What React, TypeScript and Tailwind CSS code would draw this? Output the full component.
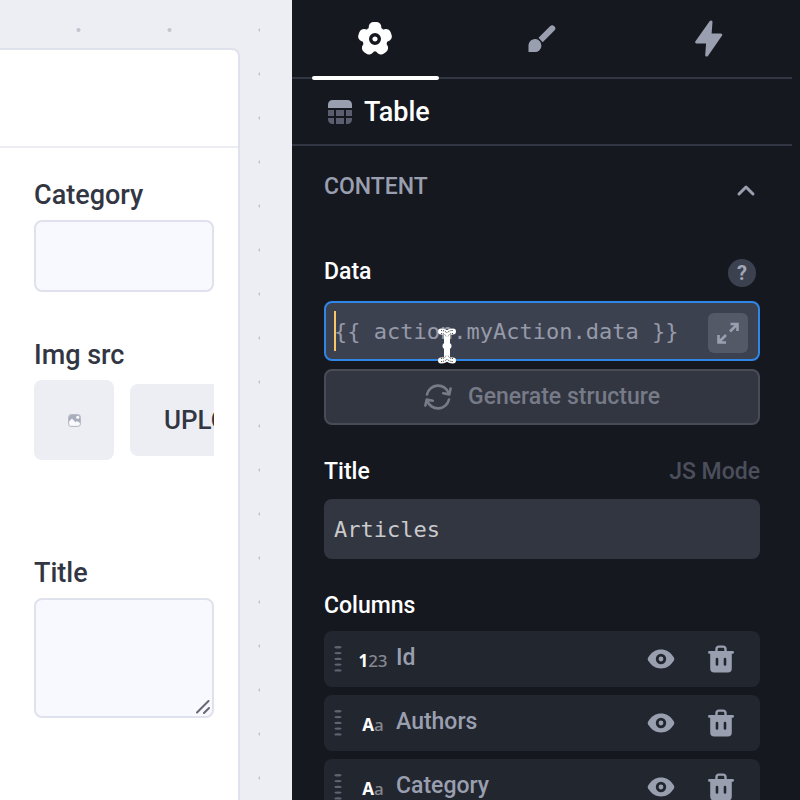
import React from "react";

type Column = { name: string; kind: "number" | "text" };

const columns: Column[] = [
  { name: "Id", kind: "number" },
  { name: "Authors", kind: "text" },
  { name: "Category", kind: "text" },
];

function GearIcon() {
  return (
    <svg width="36" height="36" viewBox="-18 -18 36 36" fill="currentColor" aria-hidden="true">
      <circle r="12.500" />
      {[0, 72, 144, 216, 288].map((a) => (
        <rect key={a} x="-6.300" y="-17" width="12.600" height="14" rx="5" transform={`rotate(${a})`} />
      ))}
      <circle r="4.300" fill="none" stroke="#15181f" strokeWidth="3.400" />
    </svg>
  );
}

function BrushIcon() {
  return (
    <svg width="30" height="30" viewBox="0 0 30 30" fill="currentColor" aria-hidden="true">
      <path d="M1.500 28V20.800a6.500 6.500 0 1 1 6.500 7.200Z" />
      <path d="M11.500 13.800 23 2.300a3 3 0 0 1 4.400 4.200L15.700 18.200Z" />
    </svg>
  );
}

function BoltIcon() {
  return (
    <svg width="28" height="38" viewBox="0.5 0.5 28 38" fill="currentColor" stroke="currentColor" strokeWidth="3" strokeLinejoin="round" aria-hidden="true">
      <path d="M16.500 2.400 2.200 22.600H13.200l-1 13L26.200 15.500H15.500Z" />
    </svg>
  );
}

function TableIcon() {
  return (
    <svg width="24" height="24" viewBox="0 0 24 24" aria-hidden="true">
      <path fill="#9a9fb0" d="M0 8V4.500A4.500 4.500 0 0 1 4.500 0h15A4.500 4.500 0 0 1 24 4.500V8Z" />
      <g fill="#5a5e6e">
        <path d="M0 10h6v6H0zM8 10h8v6H8zM18 10h6v6h-6zM8 18h8v6H8z" />
        <path d="M0 18h6v6H4.500A4.500 4.500 0 0 1 0 19.500ZM18 18h6v1.500A4.500 4.500 0 0 1 19.500 24H18Z" />
      </g>
    </svg>
  );
}

function SyncIcon() {
  return (
    <svg width="28" height="28" viewBox="-14 -14 28 28" fill="none" stroke="currentColor" strokeWidth="2.600" strokeLinecap="round" strokeLinejoin="round" aria-hidden="true">
      <path d="M-11 -2.500A11.300 11.300 0 0 1 10.800 -3.500" />
      <path d="M12.600 -8.500 11.300 -2.600 5.200 -3.800" />
      <path d="M11 2.500A11.300 11.300 0 0 1 -10.800 3.500" />
      <path d="M-12.600 8.500 -11.300 2.600 -5.200 3.800" />
    </svg>
  );
}

function ImageIcon() {
  return (
    <svg width="13" height="13" viewBox="0 0 13 13" aria-hidden="true">
      <rect x=".6" y=".6" width="11.800" height="11.800" rx="2.500" fill="#f8f9fc" stroke="#b0b4c2" />
      <path fill="#a9aebd" d="M1 7.500V3a2 2 0 0 1 2-2h7a2 2 0 0 1 2 2v6L9 7 7.500 8.300 4 4.500Z" />
      <circle cx="9.700" cy="3.200" r="1.500" fill="#fff" />
    </svg>
  );
}

function EyeIcon() {
  return (
    <svg width="28" height="20" viewBox="-14 -10 28 20" fill="currentColor" aria-hidden="true">
      <path d="M-13 -1.200C-9.500 -7-5 -9.400 0 -9.400S9.500 -7 13 -1.200Q13.700 0 13 1.200C9.500 7 5 9.400 0 9.400S-9.500 7-13 1.200Q-13.700 0-13 -1.200Z" />
      <circle r="3.800" fill="none" stroke="#22262f" strokeWidth="2.800" />
    </svg>
  );
}

function TrashIcon() {
  return (
    <svg width="28" height="28" viewBox="0 0 28 28" aria-hidden="true">
      <path d="M9.500 7V4A2.500 2.500 0 0 1 12 1.600h4A2.500 2.500 0 0 1 18.500 4v3" fill="none" stroke="currentColor" strokeWidth="2.400" />
      <rect x="1" y="6" width="26" height="2.800" rx="1.400" fill="currentColor" />
      <path d="M3.200 7h21.600v16.500a4 4 0 0 1-4 4H7.200a4 4 0 0 1-4-4Z" fill="currentColor" />
      <path d="M10 14v5.500M18 14v5.500" stroke="#22262f" strokeWidth="2.600" strokeLinecap="round" />
    </svg>
  );
}

function DragHandle() {
  return (
    <svg width="8" height="26" viewBox="0 0 8 26" fill="#5f6472" aria-hidden="true">
      {[1.3, 7.1, 12.9, 18.6, 24.4].map((y) => (
        <ellipse key={y} cx="4" cy={y} rx="3.600" ry="1.200" />
      ))}
    </svg>
  );
}

function IBeam() {
  return (
    <svg className="pointer-events-none absolute left-[112px] top-[26px]" width="22" height="38" viewBox="0 0 22 38" aria-hidden="true">
      <g fill="none" stroke="#fff" strokeLinecap="round" strokeLinejoin="round">
        <path strokeWidth="6" d="M11 7v24" strokeLinecap="butt" />
        <path strokeWidth="6" d="M5 4.500q4 0 6 2.500 2-2.500 6-2.500M5 33.500q4 0 6-2.500 2 2.500 6 2.500" />
        <path strokeWidth="6" d="M9.500 19h3" />
      </g>
      <path fill="none" stroke="#15181f" strokeDasharray="1 1" d="M5 3.500q4 0 6 2.500 2-2.500 6-2.500M5 6.500q4 0 5 3M17 6.500q-4 0-5 3M5 34.500q4 0 6-2.500 2 2.500 6 2.500M5 31.500q4 0 5-3M17 31.500q-4 0-5-3" />
    </svg>
  );
}

function ColumnRow({ column }: { column: Column }) {
  return (
    <li className="flex h-14 items-center rounded-lg bg-[#22262f] pl-2.5 pr-[25px] text-[#9a9fb0]">
      <DragHandle />
      <span className="ml-4 w-[30px] pt-1 text-center font-['Noto_Sans'] text-[17px] leading-6 text-[#85888f]" aria-hidden="true">
        {column.kind === "number" ? (
          <><b className="text-white">1</b>23</>
        ) : (
          <><b className="text-white">A</b>a</>
        )}
      </span>
      <span className="ml-2 flex-1 pb-0.5 text-[23px] font-medium leading-7">{column.name}</span>
      <button type="button" aria-label={`Toggle ${column.name}`} className="mr-8"><EyeIcon /></button>
      <button type="button" aria-label={`Delete ${column.name}`}><TrashIcon /></button>
    </li>
  );
}

function Canvas() {
  return (
    <main className="min-w-0 flex-1 bg-[#edeef4] pr-8">
      <div className="flex h-full flex-col bg-[radial-gradient(circle,#c3c6d1_1.5px,transparent_2.5px)] bg-[length:91px_44px] bg-[position:right_-46px_top_8px] pr-5 pt-12">
        <section className="flex-1 rounded-tr-lg border-r-2 border-t-2 border-[#dfe1ec] bg-white">
          <div className="h-[98px] border-b-2 border-[#edeef4]" />
          <form className="flex flex-col gap-12 pl-[34px] pr-6 pt-8 text-[27px] font-medium leading-[30px] text-[#323643]">
            <div className="flex flex-col gap-2.5">
              <label htmlFor="category">Category</label>
              <input id="category" className="h-[72px] w-full rounded-lg border-2 border-[#dfe1ec] bg-[#f8f9fe] px-3 outline-none" />
            </div>
            <div className="flex min-h-[170px] flex-col gap-2.5">
              <span>Img src</span>
              <div className="flex items-center gap-4 overflow-hidden">
                <div className="flex size-20 shrink-0 items-center justify-center rounded-lg bg-[#edeef4]"><ImageIcon /></div>
                <button type="button" className="h-[72px] shrink-0 rounded-lg bg-[#edeef4] px-[34px] text-[26px] font-medium">UPLOAD</button>
              </div>
            </div>
            <div className="flex flex-col gap-2.5">
              <label htmlFor="entry-title">Title</label>
              <div className="relative h-[120px]">
                <textarea id="entry-title" className="block h-full w-full resize-none rounded-lg border-2 border-[#dfe1ec] bg-[#f8f9fe] px-3 outline-none" />
                <svg className="pointer-events-none absolute bottom-1 right-1" width="14" height="14" viewBox="0 0 14 14" stroke="#666873" strokeWidth="2" strokeLinecap="round" aria-hidden="true">
                  <path d="M1 12.500 12.500 1M8 13l5-5" />
                </svg>
              </div>
            </div>
          </form>
        </section>
      </div>
    </main>
  );
}

function Inspector() {
  return (
    <aside className="w-[508px] shrink-0 bg-[#15181f] pr-2 text-white">
      <nav role="tablist" className="grid h-[79px] grid-cols-3 border-b-2 border-[#323643] text-[#9a9fb0]">
        <button type="button" role="tab" aria-selected="true" aria-label="Settings" className="relative flex items-center justify-center text-white">
          <GearIcon />
          <span className="absolute inset-x-5 -bottom-[3px] h-1 rounded-sm bg-white" />
        </button>
        <button type="button" role="tab" aria-selected="false" aria-label="Styles" className="flex items-center justify-center"><BrushIcon /></button>
        <button type="button" role="tab" aria-selected="false" aria-label="Actions" className="flex items-center justify-center"><BoltIcon /></button>
      </nav>
      <header className="flex h-[67px] items-center gap-3 border-b-2 border-[#323643] pl-9">
        <TableIcon />
        <h1 className="text-[27px] font-medium leading-8">Table</h1>
      </header>

      <div className="px-8 pt-6 text-[23px] font-medium leading-[30px]">
        <button type="button" aria-expanded="true" className="flex h-8 w-full items-center justify-between pt-0.5 text-[#9a9fb0]">
          CONTENT
          <svg width="28" height="28" viewBox="0 0 28 28" fill="none" stroke="currentColor" strokeWidth="3" strokeLinecap="round" strokeLinejoin="round" aria-hidden="true">
            <path d="m7 21 7-7 7 7" />
          </svg>
        </button>

        <div className="mb-3.5 mt-[55px] flex h-[30px] items-start justify-between">
          <label htmlFor="data">Data</label>
          <button type="button" aria-label="Help" className="mr-1 flex size-7 items-center justify-center self-end rounded-full bg-[#3c4150] text-[20px] font-bold leading-7 text-[#a2a6b5]">?</button>
        </div>
        <div className="relative h-15">
          <input id="data" placeholder="{{ action.myAction.data }}" className="h-full w-full rounded-lg border-2 border-[#2f86e6] bg-[#3c4150] pl-2 pr-14 font-['DejaVu_Sans_Mono',monospace] text-[22px] font-normal outline-none placeholder:text-[#969aa8]" />
          <span className="absolute left-2.5 top-2.5 h-10 w-0.5 bg-[#fcc565]" />
          <button type="button" aria-label="Expand editor" className="absolute right-3 top-3 size-10 rounded-md bg-[#545968] text-[#9a9fb0]">
            <svg width="40" height="40" viewBox="0 0 40 40" fill="none" stroke="currentColor" strokeWidth="2.600" aria-hidden="true">
              <path d="M22.500 11H29.500V18M29.500 11 22 18.500M10.500 22v7.500h7.500M10.500 29.500 18 22" />
            </svg>
          </button>
          <IBeam />
        </div>
        <button type="button" className="mt-2 flex h-14 w-full items-center justify-center gap-4 rounded-lg border-2 border-[#494c57] bg-[#323641] text-[#777b88]">
          <SyncIcon />
          <span>Generate structure</span>
        </button>

        <div className="mb-3 mt-8 flex h-[30px] items-start justify-between">
          <label htmlFor="title">Title</label>
          <button type="button" className="text-[#4b4f5b]">JS Mode</button>
        </div>
        <input id="title" defaultValue="Articles" className="block h-15 w-full rounded-lg bg-[#323641] px-2.5 font-['DejaVu_Sans_Mono',monospace] text-[22px] font-normal text-[#c9cacc] outline-none" />

        <h2 className="mb-2.5 mt-8">Columns</h2>
        <ul className="flex flex-col gap-2">
          {columns.map((column) => (
            <ColumnRow key={column.name} column={column} />
          ))}
        </ul>
      </div>
    </aside>
  );
}

export default function App() {
  return (
    <div className="flex h-screen overflow-hidden font-[Roboto,sans-serif]">
      <Canvas />
      <Inspector />
    </div>
  );
}
